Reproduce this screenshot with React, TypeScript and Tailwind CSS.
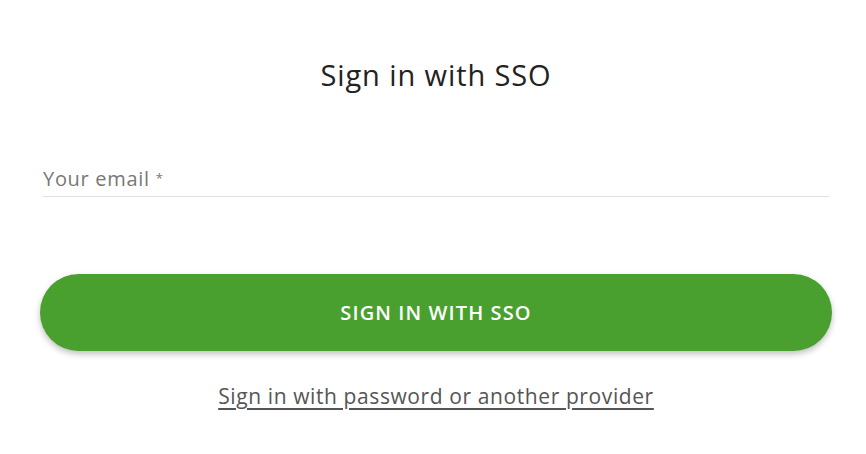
export default function App() {
  return (
    <div className="min-h-[454px] bg-white pl-[40px] pr-[34px] pt-[56px] font-['Open_Sans',sans-serif]">
      <h1 className="text-center text-[29px] leading-[38px] font-normal tracking-[0.9px] text-[#222]">
        Sign in with SSO
      </h1>

      {/* Email field */}
      <div className="mx-[3px] mt-[71px] border-b border-[#e0e0e0] pb-[4px]">
        <label className="block text-[20px] leading-[27px] tracking-[0.7px] text-[#777]">
          Your email <span className="align-top text-[13px]">*</span>
        </label>
      </div>

      <button className="mt-[77px] flex h-[77px] w-full items-center justify-center rounded-full bg-[#4aa02f] text-[20px] font-semibold tracking-[1.1px] text-white shadow-[0_3px_6px_rgba(0,0,0,0.25)]">
        SIGN IN WITH SSO
      </button>

      <div className="mt-[31px] text-center">
        <a href="#" className="text-[21px] leading-[28px] tracking-[0.6px] text-[#555] underline underline-offset-[4px]">
          Sign in with password or another provider
        </a>
      </div>
    </div>
  );
}
